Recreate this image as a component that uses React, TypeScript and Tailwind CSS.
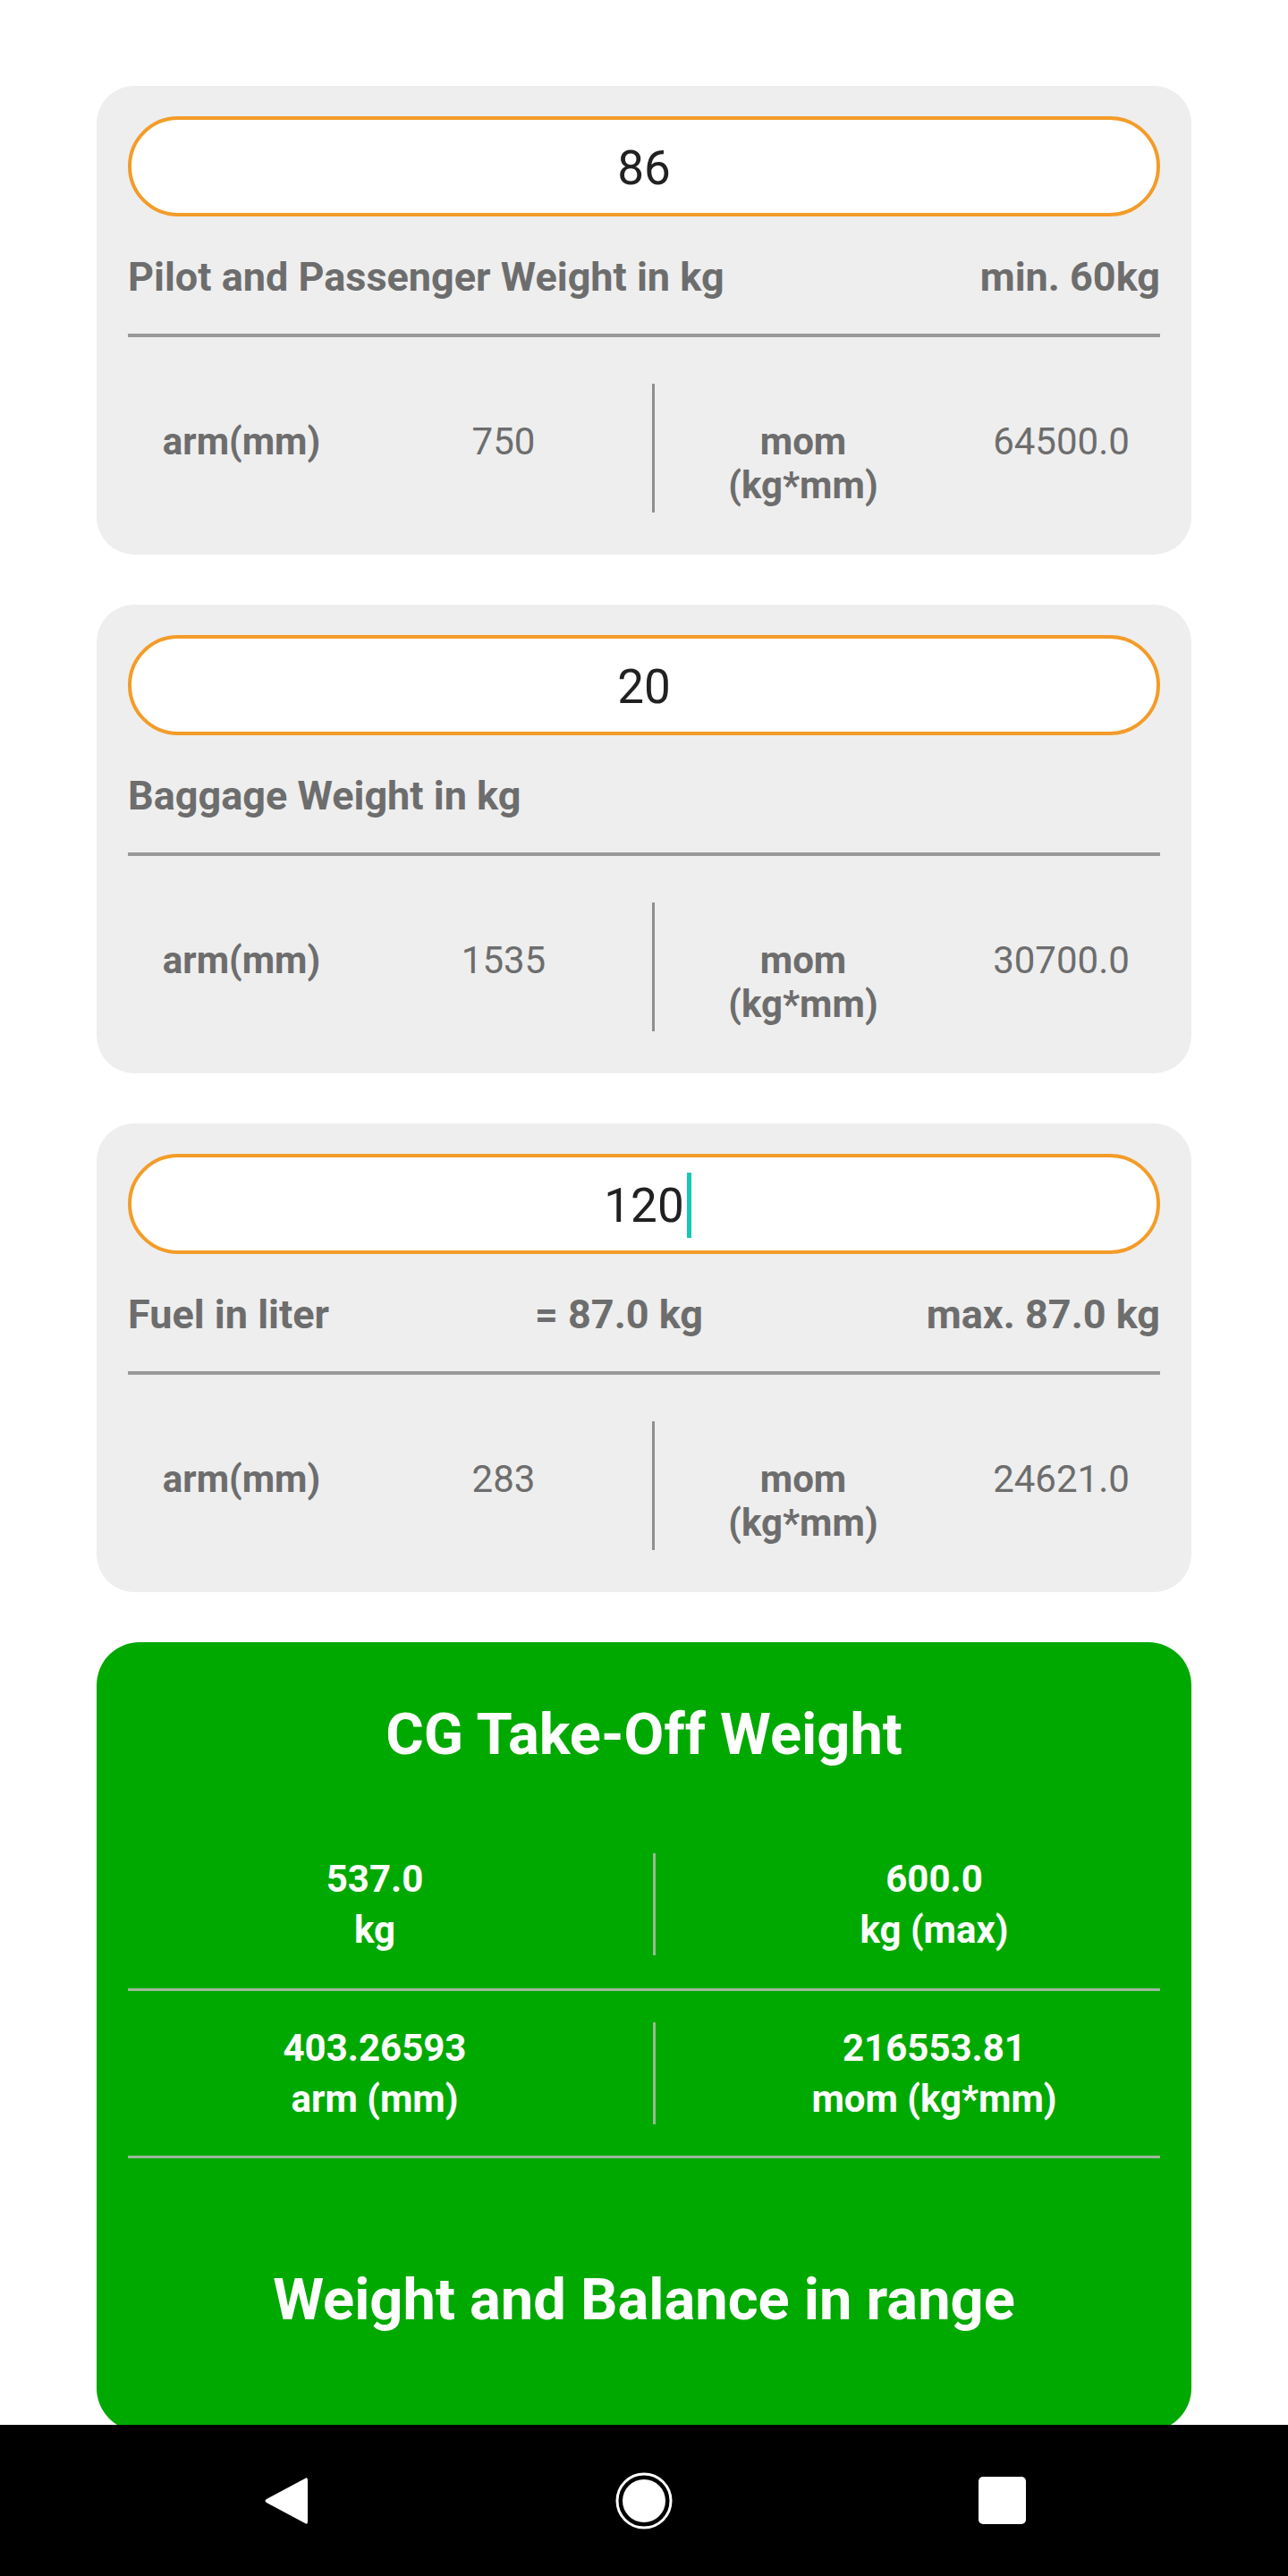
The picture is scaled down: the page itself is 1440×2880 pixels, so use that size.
import React from 'react';

interface LoadItem {
  value: string;
  cursor?: boolean;
  labels: string[];
  arm: string;
  mom: string;
}

const items: LoadItem[] = [
  { value: '86', labels: ['Pilot and Passenger Weight in kg', 'min. 60kg'], arm: '750', mom: '64500.0' },
  { value: '20', labels: ['Baggage Weight in kg'], arm: '1535', mom: '30700.0' },
  { value: '120', cursor: true, labels: ['Fuel in liter', '= 87.0 kg', 'max. 87.0 kg'], arm: '283', mom: '24621.0' },
];

const LabelRow = ({ labels }: { labels: string[] }) => {
  if (labels.length === 3) {
    return (
      <div className="mt-[41px] grid grid-cols-[455px_auto_1fr] text-[45px] leading-[53px] font-bold text-[#6d6d6d]">
        <span>{labels[0]}</span>
        <span>{labels[1]}</span>
        <span className="text-right">{labels[2]}</span>
      </div>
    );
  }
  return (
    <div className="mt-[41px] flex justify-between text-[45px] leading-[53px] font-bold text-[#6d6d6d]">
      {labels.map((l) => (
        <span key={l}>{l}</span>
      ))}
    </div>
  );
};

const LoadCard = ({ item }: { item: LoadItem }) => (
  <div className="rounded-[42px] bg-[#eeeeee] px-[35px] pt-[34px] pb-[47px]">
    <div className="flex h-[112px] items-center justify-center rounded-full border-[4px] border-[#f39c29] bg-white pt-[5px] text-[53px] text-[#212121]">
      <span className="relative">
        {item.value}
        {item.cursor && (
          <span className="absolute left-full top-1/2 ml-[3px] h-[73px] w-[5px] -translate-y-[52%] bg-[#16c8b6]" />
        )}
      </span>
    </div>

    <LabelRow labels={item.labels} />

    <div className="mt-[37px] h-[4px] bg-[#999999]" />

    <div className="mt-[52px] grid h-[144px] grid-cols-[254px_332px_3px_332px_1fr] text-[#6d6d6d]">
      <div className="pt-[40px] text-center text-[42px] leading-[49px] font-bold">arm(mm)</div>
      <div className="pt-[40px] text-center text-[42px] leading-[49px]">{item.arm}</div>
      <div className="bg-[#8f8f8f]" />
      <div className="pt-[40px] text-center text-[42px] leading-[49px] font-bold">
        mom
        <br />
        (kg*mm)
      </div>
      <div className="pt-[40px] pl-[12px] text-center text-[42px] leading-[49px]">{item.mom}</div>
    </div>
  </div>
);

const ResultRow = ({ left, right }: { left: [string, string]; right: [string, string] }) => (
  <div className="flex text-[42px] leading-[57px] font-bold text-white">
    <div className="w-[622px] text-center">
      {left[0]}
      <br />
      {left[1]}
    </div>
    <div className="w-[3px] bg-[#9db89a]" />
    <div className="flex-1 pl-[24px] text-center">
      {right[0]}
      <br />
      {right[1]}
    </div>
  </div>
);

const NavBar = () => (
  <div className="flex h-[169px] shrink-0 items-center justify-center gap-[300px] bg-black">
    <div className="flex w-[100px] justify-center">
      <svg width="52" height="58" viewBox="0 0 52 58">
        <path d="M47 4 Q50 2 50 6 L50 52 Q50 56 47 54 L4 31 Q1 29 4 27 Z" fill="white" />
      </svg>
    </div>
    <div className="flex w-[100px] justify-center">
      <svg width="64" height="64" viewBox="0 0 64 64">
        <circle cx="32" cy="32" r="30" fill="none" stroke="white" strokeWidth="3" />
        <circle cx="32" cy="32" r="24" fill="white" />
      </svg>
    </div>
    <div className="flex w-[100px] justify-center">
      <div className="h-[53px] w-[53px] rounded-[5px] bg-white" />
    </div>
  </div>
);

export default function App() {
  return (
    <div className="flex h-[2880px] w-[1440px] flex-col bg-white font-['Roboto',sans-serif]">
      <div className="flex-1 overflow-hidden px-[108px] pt-[96px]">
        <div className="flex flex-col gap-[56px]">
          {items.map((item) => (
            <LoadCard key={item.value} item={item} />
          ))}

          <div className="rounded-[48px] bg-[#00a900] pt-[66px] pb-[109px]">
            <h2 className="text-center text-[65px] leading-[75px] font-bold text-white">CG Take-Off Weight</h2>

            <div className="mt-[95px]">
              <ResultRow left={['537.0', 'kg']} right={['600.0', 'kg (max)']} />
            </div>
            <div className="mx-[35px] mt-[37px] h-[3px] bg-[#9db89a]" />
            <div className="mt-[35px]">
              <ResultRow left={['403.26593', 'arm (mm)']} right={['216553.81', 'mom (kg*mm)']} />
            </div>
            <div className="mx-[35px] mt-[35px] h-[3px] bg-[#9db89a]" />

            <p className="mt-[121px] text-center text-[65px] leading-[75px] font-bold text-white">
              Weight and Balance in range
            </p>
          </div>
        </div>
      </div>
      <NavBar />
    </div>
  );
}
